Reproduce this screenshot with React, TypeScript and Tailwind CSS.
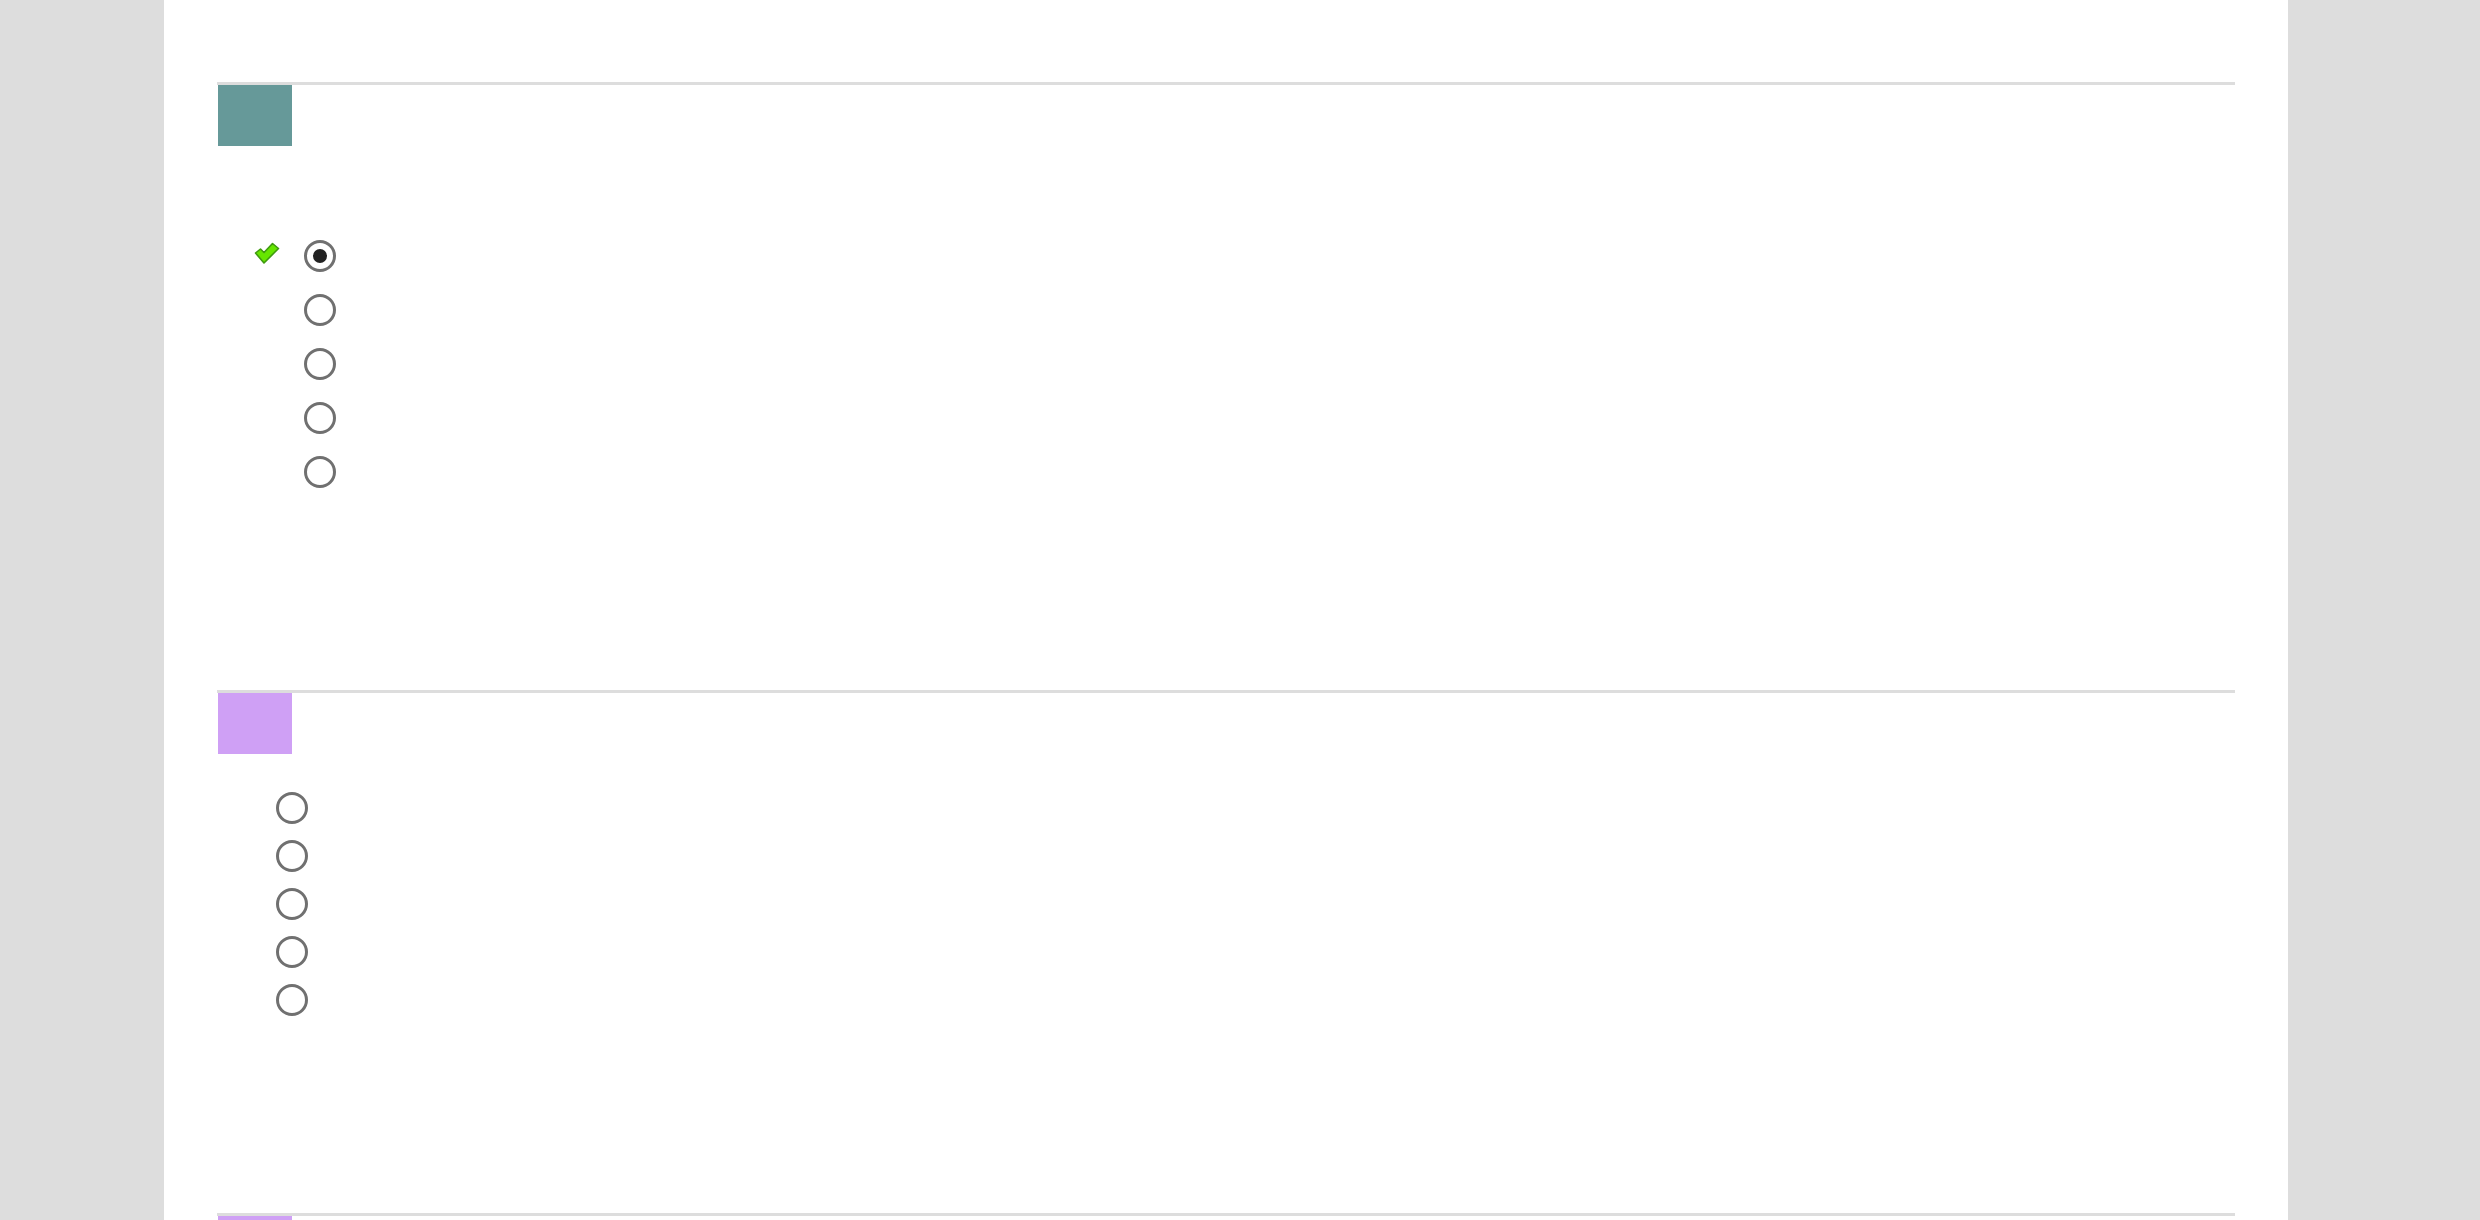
const sections = [
  { color: "bg-[#669999]", options: 5, selected: 0, correct: true },
  { color: "bg-[#cfa0f5]", options: 5, selected: -1, correct: false },
];

function Radio({ checked }: { checked: boolean }) {
  return (
    <span className="flex h-[32px] w-[32px] items-center justify-center rounded-full border-[3px] border-[#707070] bg-white">
      {checked && <span className="h-[14px] w-[14px] rounded-full bg-[#222222]" />}
    </span>
  );
}

function CheckMark() {
  return (
    <svg width="26" height="23" viewBox="0 0 26 23" className="block">
      <path
        d="M1.5 11 L6.5 7 L10 10.5 L18.5 1.5 L24.5 6.5 L10 21 Z"
        fill="#66e600"
        stroke="#3f9a10"
        strokeWidth="1.6"
        strokeLinejoin="round"
      />
    </svg>
  );
}

export default function App() {
  return (
    <div className="min-h-[1220px] w-full bg-[#dddddd]" style={{ fontFamily: '"Liberation Sans", Arial, sans-serif' }}>
      <div className="ml-[164px] min-h-[1220px] w-[2124px] bg-white px-[53px] pt-[82px]">
        {/* question 1 */}
        <div className="border-t-[3px] border-[#dddddd] pb-[191px]">
          <div className={`ml-[1px] h-[61px] w-[74px] ${sections[0].color}`} />
          <div className="mt-[83px] flex flex-col">
            {Array.from({ length: sections[0].options }).map((_, i) => (
              <div key={i} className="flex h-[54px] items-center">
                <div className="ml-[37px] flex w-[50px] items-center pb-[6px]">
                  {i === sections[0].selected && sections[0].correct && <CheckMark />}
                </div>
                <Radio checked={i === sections[0].selected} />
              </div>
            ))}
          </div>
        </div>

        {/* question 2 */}
        <div className="border-t-[3px] border-[#dddddd] pb-[189px]">
          <div className={`ml-[1px] h-[61px] w-[74px] ${sections[1].color}`} />
          <div className="mt-[30px] flex flex-col">
            {Array.from({ length: sections[1].options }).map((_, i) => (
              <div key={i} className="flex h-[48px] items-center pl-[59px]">
                <Radio checked={i === sections[1].selected} />
              </div>
            ))}
          </div>
        </div>

        {/* question 3 (cut off) */}
        <div className="border-t-[3px] border-[#dddddd]">
          <div className="ml-[1px] h-[61px] w-[74px] bg-[#cfa0f5]" />
        </div>
      </div>
    </div>
  );
}
